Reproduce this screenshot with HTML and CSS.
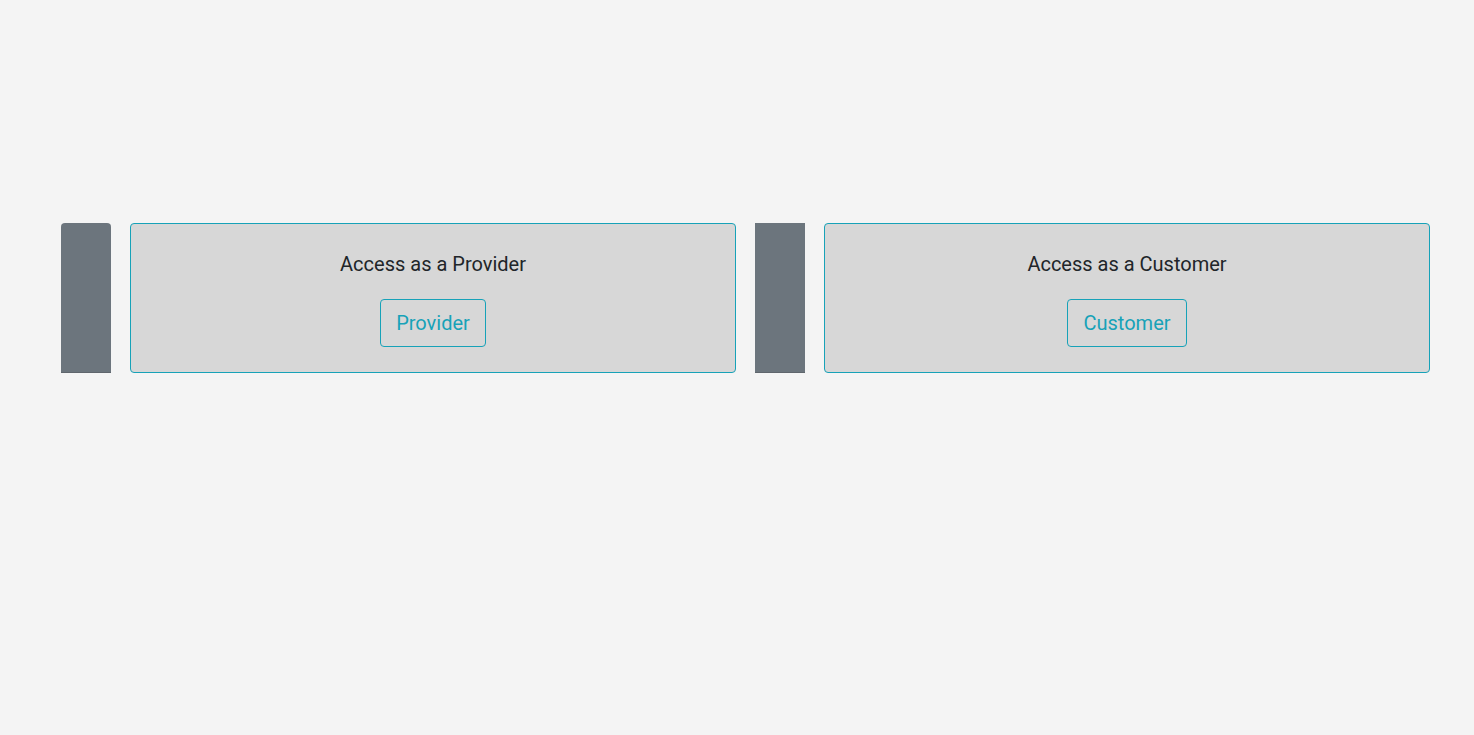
FILE: index.html
```html
<!DOCTYPE html>
<html lang="en">
<head>
<meta charset="utf-8">
<title>Access</title>
<link rel="stylesheet" href="styles.css">
</head>
<body>
<div class="page">
  <div class="row">
    <div class="unit">
      <div class="side side-rounded"></div>
      <div class="card">
        <div class="card-title">Access as a Provider</div>
        <button class="btn">Provider</button>
      </div>
    </div>
    <div class="unit">
      <div class="side"></div>
      <div class="card">
        <div class="card-title">Access as a Customer</div>
        <button class="btn">Customer</button>
      </div>
    </div>
  </div>
</div>
</body>
</html>
```

FILE: styles.css
```css
* { box-sizing: border-box; }
html, body { margin: 0; padding: 0; }
body {
  background: #f4f4f4;
  font-family: Roboto, "Liberation Sans", sans-serif;
  color: #212529;
  width: 1474px;
  height: 735px;
  overflow: hidden;
}
.page {
  padding: 223px 44px 0 61px;
}
.row {
  display: flex;
  gap: 19px;
}
.unit {
  display: flex;
  gap: 19px;
  width: 675px;
}
.side {
  width: 50px;
  height: 150px;
  background: #6c757d;
  box-shadow: inset 0 -1px 0 #5f666d;
  flex: none;
}
.side-rounded {
  border-radius: 4px 4px 0 0;
}
.card {
  width: 606px;
  height: 150px;
  background: #d7d7d7;
  border: 1px solid #17a2b8;
  border-radius: 4px;
  display: flex;
  flex-direction: column;
  align-items: center;
  padding-top: 28px;
}
.card-title {
  font-size: 20px;
  line-height: 24px;
  color: #212529;
}
.btn {
  margin-top: 23px;
  font-family: inherit;
  font-size: 20px;
  line-height: 30px;
  padding: 8px 15px;
  border: 1px solid #17a2b8;
  border-radius: 4px;
  background: transparent;
  color: #17a2b8;
  cursor: pointer;
}
```
